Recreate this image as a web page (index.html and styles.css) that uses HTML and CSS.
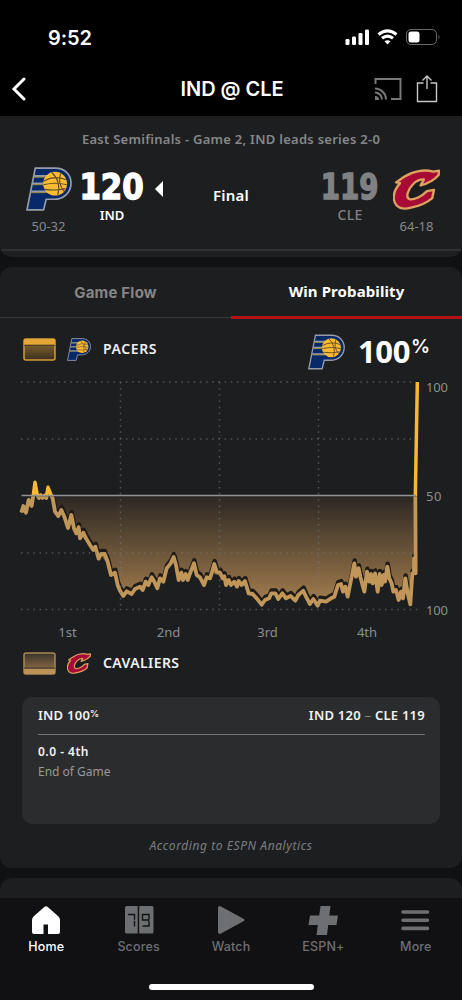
FILE: index.html
```
<!DOCTYPE html>
<html lang="en">
<head>
<meta charset="utf-8">
<title>IND @ CLE</title>
<link rel="stylesheet" href="styles.css">
</head>
<body>
<svg class="defs" aria-hidden="true">
  <symbol id="pacers" viewBox="0 0 139 132">
    <path d="M28 3H88C117 3 136 22 136 49C136 77 114 97 84 97H61L53 129H3Z" fill="#07296a" stroke="#969da9" stroke-width="5"/>
    <path d="M24 27H66M20 50H56M16 74H64" stroke="#969da9" stroke-width="7"/>
    <path d="M24 30H66M20 53H56M16 77H64" stroke="#9a8b3c" stroke-width="3"/>
    <circle cx="88" cy="50" r="36" fill="#fdbb30"/>
    <path d="M54 42Q86 24 121 38M53 53Q90 44 123 53M57 67Q92 72 119 65M78 16Q107 43 96 84M105 19Q94 45 115 73" fill="none" stroke="#624d29" stroke-width="3.5"/>
  </symbol>
  <symbol id="cavs" viewBox="0 0 140 122">
    <path d="M137 5L120 8C94 0 59 6 32 24L9 40L21 42C8 57 0 76 3 92C8 116 28 121 51 116C79 111 103 99 117 87L122 62L101 66C86 82 63 92 50 90C37 86 43 62 59 46C68 36 80 31 92 31C91 37 84 43 82 49C102 44 123 33 136 18Z" fill="#a70b35" stroke="#dca15e" stroke-width="7" stroke-linejoin="round"/>
  </symbol>
</svg>
<div class="phone">
  <header class="top">
    <div class="status">
      <span class="time">9:52</span>
      <svg class="status-icons" viewBox="0 0 96 20">
        <g fill="#fff"><rect x=".5" y="11" width="4" height="6" rx="1.2"/><rect x="7" y="8.500" width="4" height="8.500" rx="1.2"/><rect x="13.500" y="5" width="4" height="12" rx="1.2"/><rect x="20" y="1.500" width="4" height="15.500" rx="1.2"/></g>
        <g fill="none" stroke="#fff" stroke-width="3"><path d="M33.500 6.500Q42.500-.8 51.500 6.500M37 10.300Q42.500 6 48 10.300"/></g><path d="M39.500 13.300Q42.500 11 45.500 13.300L42.500 16.500Z" fill="#fff"/>
        <rect x="61.500" y="1.500" width="30" height="15" rx="4.500" fill="none" stroke="#67686a"/><rect x="63.500" y="3.500" width="11" height="11" rx="2.500" fill="#fff"/><path d="M93.500 6.500Q95.500 9 93.500 11.500Z" fill="#67686a"/>
      </svg>
    </div>
    <div class="nav">
      <svg class="back" viewBox="0 0 16 24"><path d="M13 2L3 12L13 22" fill="none" stroke="#fff" stroke-width="3" stroke-linecap="round"/></svg>
      <h1>IND @ CLE</h1>
      <svg class="cast" viewBox="0 0 28 24"><path d="M1.500 7V2H26.500V22H17M1 11.500A11 11 0 0 1 12 22.500M1 15.500A7 7 0 0 1 8 22.500" fill="none" stroke="#77777a" stroke-width="2"/><path d="M1 19A4 4 0 0 1 5 23H1Z" fill="#77777a"/></svg>
      <svg class="share" viewBox="0 0 22 28"><path d="M7.500 8H1.500V26.500H20.500V8H14.500M11 14V1M6.500 5.500L11 1L15.500 5.500" fill="none" stroke="#c7c7c8" stroke-width="1.400"/></svg>
    </div>
  </header>

  <section class="scoreboard">
    <p class="series">East Semifinals - Game 2, IND leads series 2-0</p>
    <div class="score-row">
      <div class="side-logo"><svg class="pacers-lg"><use href="#pacers"/></svg><span class="record">50-32</span></div>
      <div class="points home"><b>120</b><span>IND</span></div>
      <svg class="winner" viewBox="0 0 8 16"><path d="M8 0V16L0 8Z" fill="#fff"/></svg>
      <div class="final">Final</div>
      <div class="points away"><b>119</b><span>CLE</span></div>
      <div class="side-logo"><svg class="cavs-lg"><use href="#cavs"/></svg><span class="record">64-18</span></div>
    </div>
  </section>

  <section class="card">
    <div class="tabs"><div class="tab">Game Flow</div><div class="tab active">Win Probability</div></div>
    <div class="legend">
      <svg class="swatch" viewBox="0 0 33 23"><defs><linearGradient id="ga" x2="0" y2="1"><stop stop-color="#947030"/><stop offset="1" stop-color="#39301f"/></linearGradient></defs><rect x="1" y="1" width="31" height="21" rx="2" fill="url(#ga)" stroke="#d69c36" stroke-width="1.500"/><path d="M1 1H32V6.500H1Z" fill="#e4a637"/><path d="M1 7.500H32" stroke="#51401f"/></svg>
      <svg class="team-sm"><use href="#pacers"/></svg>
      <span class="team-name">PACERS</span>
      <svg class="pacers-md"><use href="#pacers"/></svg>
      <span class="chance"><b>100</b><i>%</i></span>
    </div>
    <svg class="chart" viewBox="0 374 462 270">
      <defs>
        <linearGradient id="brown" gradientUnits="userSpaceOnUse" x1="0" y1="76" x2="0" y2="400"><stop stop-color="#2b2723"/><stop offset="1" stop-color="#a47d4e"/></linearGradient>
        <clipPath id="area"><rect x="160" y="79" width="1090" height="360"/></clipPath>
        <clipPath id="below"><rect x="0" y="79" width="1300" height="360"/></clipPath>
        <clipPath id="above"><rect x="0" y="-266" width="1300" height="344"/></clipPath>
        <path id="curve" d="M64 128L70 108L78 128L86 90L95 108L100 75L105 37L112 75L117 84L122 75L128 84L134 76L139 84L144 52L152 72L158 85L165 125L175 138L184 120L193 140L204 174L214 135L222 175L229 190L236 172L240 205L250 188L258 205L270 225L280 240L286 230L296 266L303 252L314 252L323 275L333 315L345 308L353 345L360 362L370 378L380 364L395 372L405 357L420 350L428 360L437 335L445 345L455 322L463 335L472 355L480 325L490 335L500 295L512 280L521 261L528 285L536 330L544 308L549 330L557 312L563 330L572 305L582 280L590 315L600 322L612 345L620 322L630 325L638 300L643 282L650 305L660 308L668 325L673 319L678 345L686 330L693 345L703 335L711 350L716 333L725 345L735 333L746 370L758 372L770 385L785 404L795 390L807 385L814 370L826 370L835 387L847 370L858 385L872 378L886 392L895 375L910 362L918 380L930 402L940 387L953 407L960 392L978 395L993 385L1003 380L1014 345L1023 342L1029 365L1036 350L1043 380L1051 340L1058 305L1063 280L1068 320L1076 295L1081 320L1093 365L1101 305L1108 335L1113 312L1118 340L1125 310L1133 365L1139 312L1145 345L1151 315L1155 335L1162 290L1168 325L1175 340L1180 365L1188 360L1196 390L1203 365L1209 385L1216 325L1223 370L1231 403L1237 310L1242 310L1242 265L1247 310L1246 76L1252 -264"/>
      </defs>
      <g transform="translate(0 470) scale(.33333)" fill="none" stroke-linejoin="round">
        <g clip-path="url(#area)"><use href="#curve" fill="url(#brown)"/><path fill="url(#brown)" d="M158 76L1246 76L1231 300L1060 280L950 370L790 370L640 310L520 270L370 340Z"/></g>
        <g clip-path="url(#area)"><use href="#curve" transform="translate(1 -9)" stroke="#1e1b18" stroke-width="13"/></g>
        <g clip-path="url(#below)"><use href="#curve" stroke="#c19659" stroke-width="11.500"/></g>
        <g clip-path="url(#above)"><use href="#curve" stroke="#f8b82f" stroke-width="10.500"/></g>
      </g>
      <path d="M21 382H416M21 439H416M21 553H416M21 609.500H418" class="grid"/>
      <path d="M120.500 382V609M219.500 382V609M318.500 382V609" class="grid"/>
      <path d="M21.500 495.600H416" stroke="#929292" stroke-width="1.500"/>
      <g class="axis"><text x="426" y="391.500" textLength="22">100</text><text x="426" y="501" textLength="15.500">50</text><text x="426" y="614.500" textLength="22">100</text>
      <g text-anchor="middle"><text x="67.500" y="637">1st</text><text x="168.500" y="637">2nd</text><text x="267.500" y="637">3rd</text><text x="367" y="637">4th</text></g></g>
    </svg>
    <div class="legend lower">
      <svg class="swatch" viewBox="0 0 33 23"><defs><linearGradient id="gb" x2="0" y2="1"><stop stop-color="#3a342c"/><stop offset="1" stop-color="#9e794a"/></linearGradient></defs><rect x="1" y="1" width="31" height="21" rx="2" fill="url(#gb)" stroke="#a98754" stroke-width="1.500"/><path d="M1 17H32V22H1Z" fill="#bd9256"/><path d="M1 16H32" stroke="#40372b"/></svg>
      <svg class="team-sm"><use href="#cavs"/></svg>
      <span class="team-name">CAVALIERS</span>
    </div>
    <div class="play">
      <div class="play-head"><span>IND 100<i>%</i></span><span>IND 120 <em>–</em> CLE 119</span></div>
      <strong>0.0 - 4th</strong>
      <p>End of Game</p>
    </div>
    <p class="credit">According to ESPN Analytics</p>
  </section>
  <div class="next-card"></div>

  <footer class="tabbar">
    <div class="items">
      <div class="item current"><svg viewBox="0 0 32 32"><path d="M14 3.200Q16 1.200 18 3.200L28.500 12.500Q30 14 30 16V28Q30 30 28 30H18V20.500H13.500V30H4Q2 30 2 28V16Q2 14 3.500 12.500Z" fill="currentColor"/></svg><span>Home</span></div>
      <div class="item"><svg viewBox="0 0 32 32"><path d="M3.500 2H14.700V29.500H3.500Q2 29.500 2 28V3.500Q2 2 3.500 2ZM16.200 2H29Q30.500 2 30.500 3.500V28Q30.500 29.500 29 29.500H16.200Z" fill="currentColor"/><path d="M5 10.500H11.500V15.700M11.500 16.700V22.500M26 16H19.500V10.500H26V15.500M26 16.700V22H19.500" fill="none" stroke="#121214" stroke-width="1.400"/></svg><span>Scores</span></div>
      <div class="item"><svg viewBox="0 0 32 32"><path d="M3 4.500Q3 1 6 2.500L28 14.500Q31 16 28 17.500L6 29.500Q3 31 3 27.500Z" fill="currentColor"/></svg><span>Watch</span></div>
      <div class="item"><svg viewBox="0 0 32 32"><path d="M13.500 2H23.500L22.300 11.500H31L29.500 21H21.200L20 31H9.500L10.800 21H1.500L3 11.500H12.200Z" fill="currentColor"/></svg><span>ESPN+</span></div>
      <div class="item"><svg viewBox="0 0 32 32"><path d="M3 8H27.500M3 16.200H27.500M3 24.400H27.500" stroke="currentColor" stroke-width="3.600" stroke-linecap="round"/></svg><span>More</span></div>
    </div>
    <div class="home-indicator"></div>
  </footer>
</div>
</body>
</html>
```
FILE: styles.css
```
* { box-sizing: border-box; margin: 0; }
body { width: 462px; height: 1000px; overflow: hidden; background: #101113; font-family: "Noto Sans", sans-serif; }
svg { display: block; flex: none; overflow: visible; }
i, em { font-style: normal; }
.defs { position: absolute; width: 0; height: 0; }
.phone { height: 1000px; display: flex; flex-direction: column; }
.top { height: 116px; background: #000; color: #fff; flex: none; font-family: Inter, sans-serif; }
.status { height: 62px; padding: 27px 21px 0 48px; display: flex; justify-content: space-between; }
.time { font-size: 20px; line-height: 22px; font-weight: 600; letter-spacing: -.1px; }
.status-icons { width: 96px; height: 20px; margin-top: 1px; }
.nav { height: 54px; display: flex; align-items: center; padding: 0 24px 0 11px; }
.back { width: 16px; height: 24px; }
.nav h1 { width: 110px; margin-left: 150px; text-align: center; white-space: nowrap; font-size: 20px; line-height: 26px; font-weight: 600; letter-spacing: -.05px; }
.cast { width: 28px; height: 24px; margin-left: 87px; }
.share { width: 22px; height: 28px; margin-left: 14px; }
.scoreboard { height: 141px; background: linear-gradient(#1d1e20 0 133px, #303133 133px 135px, #1d1e20 135px); border-radius: 0 0 12px 12px; flex: none; padding-top: 13px; }
.series { text-align: center; font-size: 13px; line-height: 20px; font-weight: 600; color: #868789; letter-spacing: .27px; white-space: nowrap; }
.score-row { height: 90px; display: flex; padding: 18px 22px 0 26px; }
.side-logo { width: 45px; display: flex; flex-direction: column; align-items: center; }
.pacers-lg { width: 46px; height: 44px; }
.cavs-lg { width: 47px; height: 41px; margin: 2px 0 1px; }
.record { margin-top: 6px; font-size: 13px; line-height: 18px; color: #88898b; }
.points { width: 66px; height: 74px; display: flex; flex-direction: column; align-items: center; color: #fff; }
.points b { font: 700 35px/41px "DejaVu Sans", sans-serif; transform: scaleX(.88); -webkit-text-stroke: 1.500px currentColor; }
.points span { font-size: 13px; line-height: 14px; font-weight: 600; }
.home { margin-left: 8px; }
.away { margin-left: 65px; color: #808183; }
.away b { transform: scaleX(.79); }
.away span { font-size: 14px; font-weight: 500; letter-spacing: .2px; }
.away + .side-logo { margin-left: 11px; }
.winner { width: 8px; height: 16px; margin: 14px 0 0 10px; }
.final { width: 42px; margin: 18px 0 0 47px; text-align: center; color: #fff; font-size: 15px; line-height: 20px; font-weight: 600; letter-spacing: .2px; }
.card { height: 601px; margin-top: 10px; background: #1d1e20; border-radius: 12px; flex: none; }
.tabs { height: 52px; display: flex; }
.tab { width: 231px; border-bottom: 1px solid #39383a; text-align: center; font-size: 15px; line-height: 52px; font-weight: 700; color: #848587; font-family: Inter, sans-serif; height: 51px; letter-spacing: .2px; }
.active { height: 52px; color: #fff; font-family: "Noto Sans", sans-serif; line-height: 49px; border-bottom: 3px solid #b51218; letter-spacing: .1px; }
.legend { height: 55px; padding-left: 23px; display: flex; align-items: flex-start; }
.swatch { width: 33px; height: 23px; margin-top: 19px; }
.team-sm { width: 24px; height: 23px; margin: 19px 0 0 11px; }
.team-name { margin: 20px 0 0 12px; width: 204px; font-size: 14px; line-height: 20px; font-weight: 600; color: #f0f0f0; letter-spacing: .6px; }
.pacers-md { width: 37px; height: 36px; margin: 15px 0 0 1px; }
.chance { margin: 12px 0 0 13px; color: #fff; display: flex; }
.chance b { width: 52px; font-size: 31px; line-height: 40px; font-weight: 700; letter-spacing: -.4px; }
.chance i { margin-left: 1px; font: 600 19px/31px Inter, sans-serif; }
.chart { width: 462px; height: 270px; }
.grid { fill: none; stroke: #77787a99; stroke-width: 1.500; stroke-dasharray: 1.500 4.670; }
.axis { font: 13px "Noto Sans", sans-serif; fill: #8d8e90; }
.lower { height: 53px; }
.lower .swatch { margin-top: 8px; }
.lower .team-sm { height: 21px; margin-top: 9px; }
.lower .team-name { margin-top: 9px; letter-spacing: .4px; }
.play { height: 127px; margin: 0 22px; padding: 8px 15px 8px 16px; border-radius: 10px; background: #2b2c2e; color: #f2f2f2; }
.play-head { height: 30px; border-bottom: 1px solid #717274; display: flex; justify-content: space-between; font-size: 13px; line-height: 20px; font-weight: 600; letter-spacing: .25px; }
.play-head i { font: 600 9px/0 Inter, sans-serif; vertical-align: 3px; }
.play-head em { color: #858688; font-weight: 400; }
.play strong { display: block; margin-top: 7px; font-size: 12px; line-height: 20px; font-weight: 600; letter-spacing: .5px; }
.play p { color: #97989a; font-size: 12px; line-height: 20px; }
.credit { margin-top: 12px; text-align: center; color: #7d7e80; font-size: 12px; line-height: 20px; font-style: italic; letter-spacing: .58px; }
.next-card { margin-top: 10px; height: 20px; background: #1d1e20; border-radius: 12px 12px 0 0; flex: none; }
.tabbar { height: 102px; background: #111113; flex: none; padding-top: 6px; }
.items { display: flex; height: 81px; }
.item { flex: 1; display: flex; flex-direction: column; align-items: center; color: #6e6f72; font: 500 12.500px/18px Inter, sans-serif; letter-spacing: .15px; }
.item svg { width: 32px; height: 32px; margin-bottom: 2px; }
.current { color: #fff; }
.home-indicator { width: 165px; height: 6px; margin: -1px auto 0; border-radius: 3px; background: #fff; }
```
